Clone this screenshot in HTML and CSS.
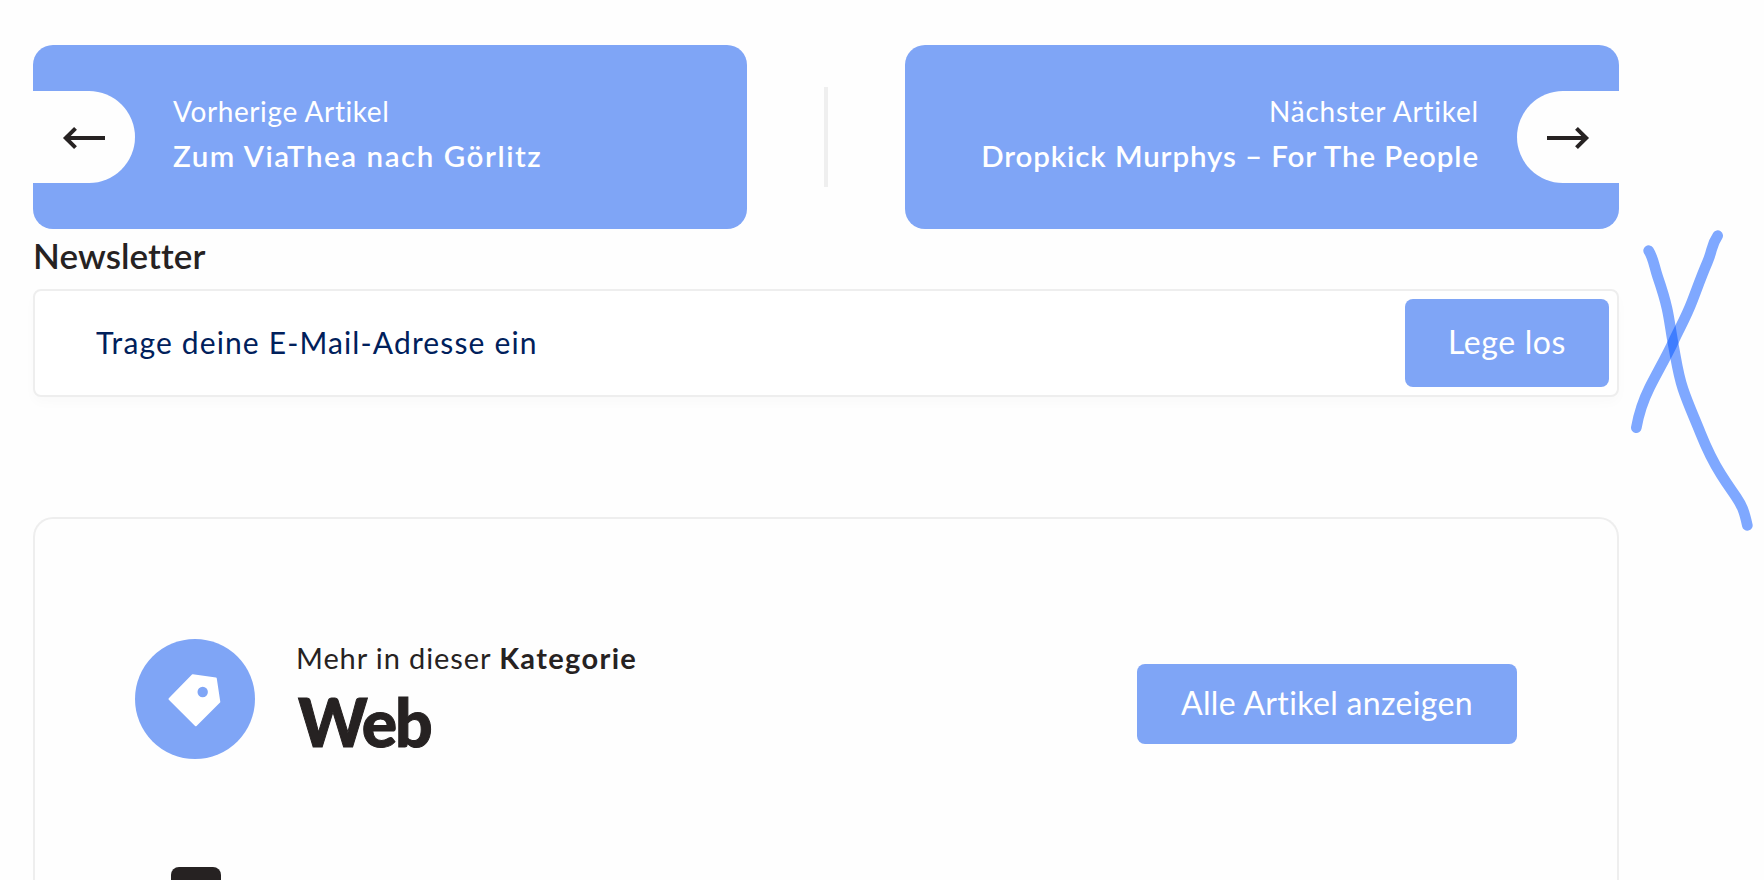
FILE: index.html
```
<!DOCTYPE html>
<html lang="de">
<head>
<meta charset="UTF-8">
<meta name="viewport" content="width=device-width, initial-scale=1.0">
<title>Newsletter</title>
<link rel="stylesheet" href="styles.css">
</head>
<body>
  <main class="page">
    <nav class="post-nav">
      <a class="post-link" href="#">
        <span class="arrow arrow-left">
          <svg width="44" height="24" viewBox="0 0 44 24" fill="none" stroke="#262222" stroke-width="4">
            <path d="M43 12H5M13.500 2.300L3.800 12l9.700 9.700"/>
          </svg>
        </span>
        <span class="post-text">
          <span class="post-label label-prev">Vorherige Artikel</span>
          <span class="post-title title-prev">Zum ViaThea nach Görlitz</span>
        </span>
      </a>
      <span class="divider"></span>
      <a class="post-link next" href="#">
        <span class="post-text">
          <span class="post-label label-next">Nächster Artikel</span>
          <span class="post-title title-next">Dropkick Murphys – For The People</span>
        </span>
        <span class="arrow arrow-right">
          <svg width="44" height="24" viewBox="0 0 44 24" fill="none" stroke="#262222" stroke-width="4">
            <path d="M1 12h38M30.500 2.300L40.200 12l-9.700 9.700"/>
          </svg>
        </span>
      </a>
    </nav>

    <h4 class="newsletter-title">Newsletter</h4>
    <form class="newsletter">
      <input class="email" type="email" placeholder="Trage deine E-Mail-Adresse ein">
      <button class="btn btn-send" type="button">Lege los</button>
    </form>

    <section class="card">
      <div class="card-head">
        <span class="tag-icon">
          <svg width="56" height="56" viewBox="0 0 56 56">
            <path fill="#fff" stroke="#fff" stroke-width="2" stroke-linejoin="round" d="M25.700 4.300L48.800 7.600 52.300 30.800 28.800 54.300 2.500 28z"/>
            <circle cx="35.700" cy="21" r="5.200" fill="#7fa5f6"/>
          </svg>
        </span>
        <div class="card-text">
          <p class="more">Mehr in dieser <strong>Kategorie</strong></p>
          <h2 class="category">Web</h2>
        </div>
        <a class="btn btn-all" href="#">Alle Artikel anzeigen</a>
      </div>
      <div class="marker"></div>
    </section>
  </main>

  <!-- handwritten X over the right margin -->
  <svg class="scribble" width="154" height="340" viewBox="0 0 462 1020">
    <path d="M323 77C302 108 309 118 292 157S264 228 246 275S210 352 190 395S140 490 119 532S88 602 79 653"/>
    <path d="M116 122C130 143 132 168 143 200S163 259 171 295S182 362 191 410S204 492 219 537S251 618 271 668S311 758 333 793S363 838 379 862S402 900 412 946"/>
  </svg>
</body>
</html>
```
FILE: styles.css
```
* {
  box-sizing: border-box;
}

body {
  margin: 0;
  padding: 45px 0 0 33px;
  font-family: Lato, sans-serif;
  background-color: #fefefe;
  color: #262222;
}

a {
  text-decoration: none;
}

.page {
  width: 1586px;
}

/* Previous / next article */
.post-nav {
  display: flex;
  align-items: center;
  justify-content: space-between;
}

.post-link {
  display: flex;
  align-items: center;
  width: 714px;
  height: 184px;
  border-radius: 20px;
  background-color: #7fa5f6;
  color: #fff;
}

.next {
  justify-content: flex-end;
  text-align: right;
}

.arrow {
  display: flex;
  align-items: center;
  width: 102px;
  height: 92px;
  padding: 1px 0 0 29px;
  background-color: #fefefe;
}

.arrow-left {
  border-radius: 0 46px 46px 0;
}

.arrow-right {
  border-radius: 46px 0 0 46px;
}

.post-text {
  display: flex;
  flex-direction: column;
  padding: 0 38px 8px;
}

.post-label {
  font-size: 28px;
  line-height: 45px;
}

.label-prev {
  letter-spacing: 0.6px;
}

.label-next {
  letter-spacing: 0.8px;
}

.post-title {
  font-size: 29.5px;
  font-weight: 600;
  line-height: 44px;
}

.title-prev {
  letter-spacing: 1.55px;
}

.title-next {
  letter-spacing: 0.9px;
}

.divider {
  width: 4px;
  height: 100px;
  background-color: #efefef;
}

/* Newsletter */
.newsletter-title {
  margin: 0 0 7px;
  font-size: 35px;
  font-weight: 600;
  line-height: 53px;
  letter-spacing: 0.1px;
}

.newsletter {
  display: flex;
  align-items: center;
  height: 108px;
  padding: 0 8px 0 0;
  border: 2px solid #eee;
  border-radius: 8px;
  background-color: #fff;
  box-shadow: 0 6px 12px rgba(0, 0, 0, 0.02);
}

.email {
  flex: 1;
  padding: 0 0 3px 61px;
  border: none;
  outline: none;
  background: none;
  font-family: inherit;
  font-size: 30px;
  letter-spacing: 1.14px;
}

.email::placeholder {
  color: #00205b;
}

.btn {
  display: flex;
  align-items: center;
  justify-content: center;
  padding: 0 0 4px;
  border: none;
  border-radius: 8px;
  background-color: #7fa5f6;
  color: #fff;
  font-family: inherit;
  font-size: 32px;
}

.btn-send {
  width: 204px;
  height: 88px;
  letter-spacing: 0.6px;
}

/* Category card */
.card {
  height: 363px;
  margin-top: 120px;
  padding: 120px 100px 0;
  border: 2px solid #eee;
  border-bottom: none;
  border-radius: 20px 20px 0 0;
  overflow: hidden;
}

.card-head {
  display: flex;
  align-items: center;
  height: 120px;
}

.tag-icon {
  display: flex;
  align-items: center;
  justify-content: center;
  width: 120px;
  height: 120px;
  border-radius: 50%;
  background-color: #7fa5f6;
}

.card-text {
  flex: 1;
  padding: 5px 0 0 41px;
}

.more {
  margin: 0;
  font-size: 29px;
  line-height: 40px;
  letter-spacing: 0.9px;
}

.more strong {
  letter-spacing: 1.35px;
}

.category {
  margin: 0 0 0 2px;
  font-size: 66px;
  font-weight: 900;
  line-height: 87px;
  letter-spacing: -2px;
  -webkit-text-stroke: 1px #262222;
}

.btn-all {
  width: 380px;
  height: 80px;
  margin-top: 10px;
  letter-spacing: 0.35px;
}

.marker {
  width: 50px;
  height: 50px;
  margin: 108px 0 0 36px;
  border-radius: 8px;
  background-color: #262222;
}

/* Drawn strokes lie over the page */
.scribble {
  position: absolute;
  top: 210px;
  left: 1610px;
  fill: none;
  stroke: rgba(0, 82, 255, 0.5);
  stroke-width: 32;
  stroke-linecap: round;
}
```
